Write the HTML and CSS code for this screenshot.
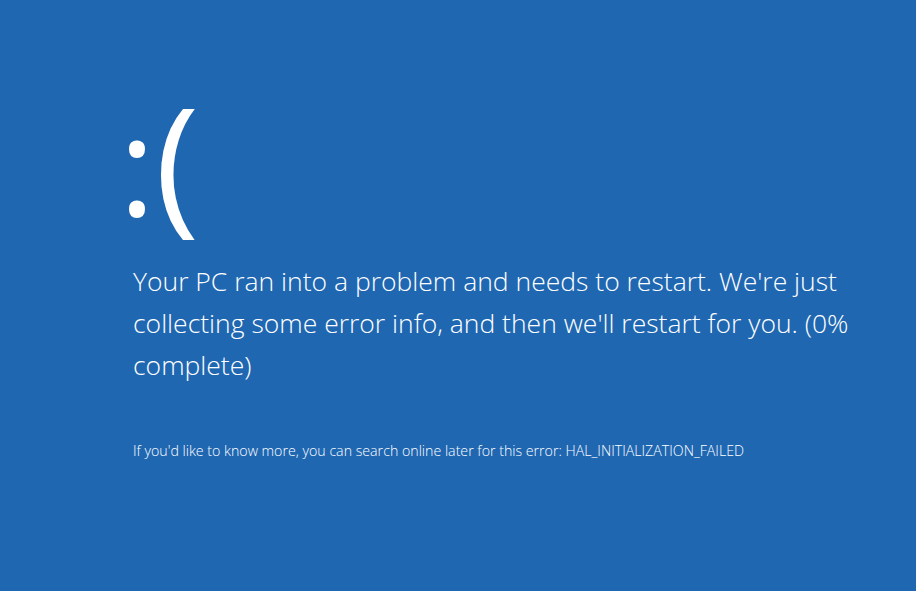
FILE: index.html
```html
<!DOCTYPE html>
<html lang="en">
<head>
<meta charset="utf-8">
<title>Your PC ran into a problem</title>
<link rel="stylesheet" href="styles.css">
</head>
<body>
<main class="screen">
  <div class="face"><span class="colon">:</span><span class="paren">(</span></div>
  <p class="message">Your PC ran into a problem and needs to restart. We're just collecting some error info, and then we'll restart for you. (0% complete)</p>
  <p class="details">If you'd like to know more, you can search online later for this error: HAL_INITIALIZATION_FAILED</p>
</main>
</body>
</html>
```

FILE: styles.css
```css
html, body {
  margin: 0;
  padding: 0;
  background: #2067b2;
  width: 916px;
  height: 591px;
  overflow: hidden;
}
.screen {
  box-sizing: border-box;
  padding: 73px 40px 0 133px;
  color: #ffffff;
  font-family: "Open Sans", "Noto Sans", "DejaVu Sans", sans-serif;
  font-weight: 300;
}
.face {
  display: flex;
  align-items: baseline;
  height: 187px;
  line-height: 170px;
  margin-left: -14px;
  font-weight: 400;
}
.colon {
  font-size: 137px;
}
.paren {
  font-size: 150px;
}
.message {
  margin: 0;
  width: 740px;
  font-size: 26.5px;
  line-height: 42px;
}
.details {
  margin: 56px 0 0 0;
  font-size: 14.2px;
  line-height: 18px;
}
```
